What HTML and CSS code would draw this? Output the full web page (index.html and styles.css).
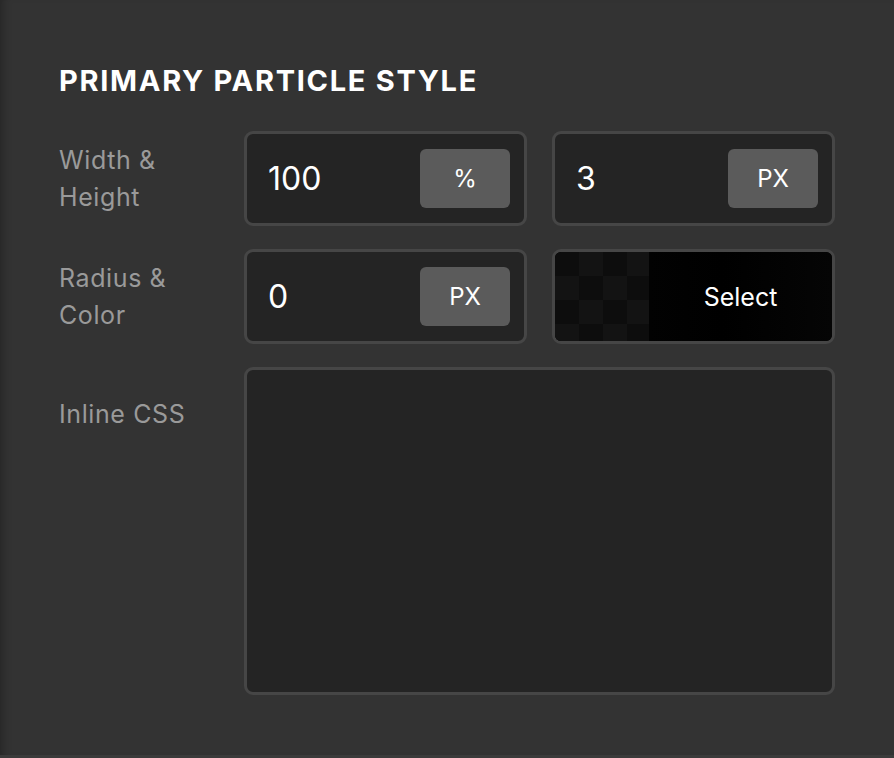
FILE: index.html
```html
<!DOCTYPE html>
<html>
<head>
<meta charset="utf-8">
<link rel="stylesheet" href="styles.css">
</head>
<body>
<div class="panel">
  <h2 class="title">PRIMARY PARTICLE STYLE</h2>
  <div class="form">
    <div class="label">Width &amp;<br>Height</div>
    <div class="field">
      <span class="value">100</span>
      <span class="unit">%</span>
    </div>
    <div class="field">
      <span class="value">3</span>
      <span class="unit">PX</span>
    </div>

    <div class="label">Radius &amp;<br>Color</div>
    <div class="field">
      <span class="value">0</span>
      <span class="unit">PX</span>
    </div>
    <div class="swatch">
      <span class="checker"></span>
      <span class="swatch-text">Select</span>
    </div>

    <div class="label">Inline CSS</div>
    <div class="textarea"></div>
  </div>
</div>
</body>
</html>
```

FILE: styles.css
```css
html, body {
  margin: 0;
  padding: 0;
  background: #333333;
}

.panel {
  box-sizing: border-box;
  height: 758px;
  padding: 63px 59px 0 59px;
  background: #333333;
  box-shadow: inset 9px 0 8px -6px rgba(0, 0, 0, 0.25);
  border-bottom: 3px solid #3b3b3b;
  font-family: Inter, "Liberation Sans", sans-serif;
}

.title {
  margin: 0 0 32px 0;
  font-size: 29px;
  line-height: 36px;
  font-weight: 700;
  letter-spacing: 1.7px;
  color: #ffffff;
}

.form {
  display: grid;
  grid-template-columns: 160px 283px 283px;
  column-gap: 25px;
  row-gap: 23px;
}

.label {
  display: flex;
  align-items: center;
  align-self: start;
  min-height: 95px;
  font-size: 25px;
  line-height: 37px;
  letter-spacing: 0.6px;
  color: #9a9a9a;
}

.field {
  box-sizing: border-box;
  height: 95px;
  display: flex;
  align-items: center;
  justify-content: space-between;
  padding: 15px 14px 15px 21px;
  background: #242424;
  border: 3px solid #464646;
  border-radius: 9px;
}

.value {
  font-size: 32px;
  color: #ffffff;
}

.unit {
  width: 90px;
  height: 59px;
  display: flex;
  align-items: center;
  justify-content: center;
  background: #5b5b5b;
  border-radius: 6px;
  color: #ffffff;
  font-size: 24px;
}

.swatch {
  box-sizing: border-box;
  height: 95px;
  display: flex;
  background: #000000;
  border: 3px solid #464646;
  border-radius: 9px;
  overflow: hidden;
}

.checker {
  width: 94px;
  flex: none;
  background-color: #0d0d0d;
  background-image:
    linear-gradient(45deg, #131313 25%, transparent 25%, transparent 75%, #131313 75%),
    linear-gradient(45deg, #131313 25%, transparent 25%, transparent 75%, #131313 75%);
  background-size: 48px 48px;
  background-position: 0 0, 24px 24px;
}

.swatch-text {
  flex: 1;
  display: flex;
  align-items: center;
  justify-content: center;
  font-size: 25px;
  color: #ffffff;
  background: linear-gradient(90deg, #020202, #000000 40%, #050505);
}

.textarea {
  grid-column: 2 / 4;
  box-sizing: border-box;
  height: 328px;
  background: #242424;
  border: 3px solid #464646;
  border-radius: 9px;
}
```
